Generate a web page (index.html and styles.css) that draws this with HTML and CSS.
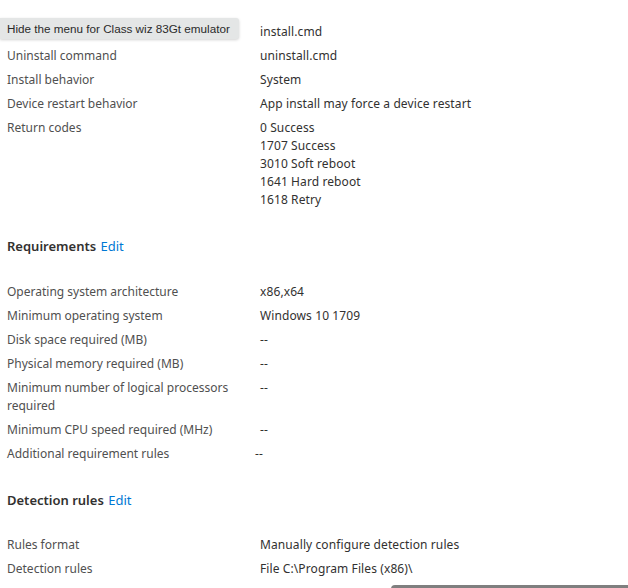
FILE: index.html
```html
<!DOCTYPE html>
<html>
<head>
<meta charset="utf-8">
<link rel="stylesheet" href="styles.css">
</head>
<body>
<div class="page">
  <div class="grid first">
    <div class="label"></div><div class="value">install.cmd</div>
    <div class="label">Uninstall command</div><div class="value">uninstall.cmd</div>
    <div class="label">Install behavior</div><div class="value">System</div>
    <div class="label">Device restart behavior</div><div class="value">App install may force a device restart</div>
    <div class="label">Return codes</div>
    <div class="value">0 Success<br>1707 Success<br>3010 Soft reboot<br>1641 Hard reboot<br>1618 Retry</div>
  </div>

  <h2 class="section">Requirements <a class="edit">Edit</a></h2>
  <div class="grid">
    <div class="label">Operating system architecture</div><div class="value">x86,x64</div>
    <div class="label">Minimum operating system</div><div class="value">Windows 10 1709</div>
    <div class="label">Disk space required (MB)</div><div class="value">--</div>
    <div class="label">Physical memory required (MB)</div><div class="value">--</div>
    <div class="label">Minimum number of logical processors required</div><div class="value">--</div>
    <div class="label">Minimum CPU speed required (MHz)</div><div class="value">--</div>
    <div class="label">Additional requirement rules</div><div class="value shifted">--</div>
  </div>

  <h2 class="section tight">Detection rules <a class="edit">Edit</a></h2>
  <div class="grid">
    <div class="label">Rules format</div><div class="value">Manually configure detection rules</div>
    <div class="label">Detection rules</div><div class="value">File C:\Program Files (x86)\</div>
  </div>
</div>
<div class="tooltip">Hide the menu for Class wiz 83Gt emulator</div>
<div class="scroll-thumb"></div>
</body>
</html>
```
FILE: styles.css
```css
html, body {
  margin: 0;
  padding: 0;
  background: #ffffff;
  overflow: hidden;
}
body {
  font-family: "Noto Sans", "Open Sans", sans-serif;
  font-size: 12px;
  color: #323130;
  width: 628px;
  height: 588px;
}
.page {
  padding: 20px 0 0 7px;
}
.grid {
  display: grid;
  grid-template-columns: 253px 1fr;
}
.label {
  padding: 3px 20px 3px 0;
  line-height: 18px;
  color: #505050;
}
.value {
  padding: 3px 0;
  line-height: 18px;
  color: #323130;
  letter-spacing: 0.1px;
}
.shifted {
  margin-left: -5px;
}
.section {
  margin: 24px 0 24px 0;
  font-size: 13px;
  line-height: 20px;
  font-weight: 600;
  color: #323130;
}
.section.tight {
  margin-bottom: 23px;
}
.edit {
  font-weight: 400;
  color: #0078d4;
  margin-left: 1px;
}
.tooltip {
  position: absolute;
  left: 0;
  top: 18px;
  width: 232px;
  height: 21px;
  padding-left: 7px;
  background: #e4e6e6;
  border-radius: 0 3px 3px 0;
  box-shadow: 0 1px 3px rgba(0,0,0,0.18);
  font-family: "Liberation Sans", Arial, sans-serif;
  font-size: 11.7px;
  line-height: 21px;
  color: #2a2a2a;
}
.scroll-thumb {
  position: absolute;
  left: 391px;
  top: 585px;
  width: 250px;
  height: 8px;
  border-radius: 4px;
  background: #7f7f7f;
}
```
